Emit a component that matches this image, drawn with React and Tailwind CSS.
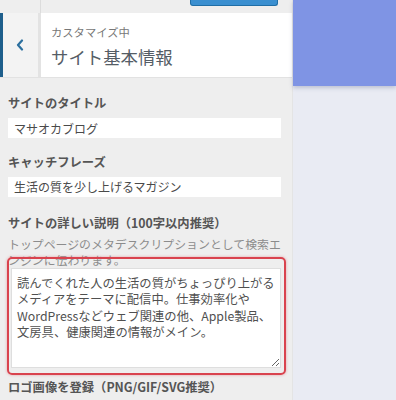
const jp = { fontFamily: '"Noto Sans CJK JP", "Noto Sans", sans-serif' };

const description = [
  '読んでくれた人の生活の質がちょっぴり上がる',
  'メディアをテーマに配信中。仕事効率化や',
  'WordPressなどウェブ関連の他、Apple製品、',
  '文房具、健康関連の情報がメイン。',
].join('\n');

function Field({ label, value }) {
  return (
    <div>
      <div className="text-[12.3px] font-bold leading-[18px] text-[#555]">{label}</div>
      <input
        readOnly
        value={value}
        className="mt-[6px] h-[20px] w-[273px] bg-white px-[6px] text-[12px] text-[#4a4a4a] outline-none"
        style={jp}
      />
    </div>
  );
}

export default function App() {
  return (
    <div className="flex h-[400px] w-[396px] overflow-hidden bg-[#e9ebf3]" style={jp}>
      {/* customizer sidebar */}
      <div className="flex w-[293px] shrink-0 flex-col border-r border-[#e4e4e4] bg-[#eeeeee]">
        <div className="flex h-[13px] shrink-0">
          <div className="w-[41px] border-r border-[#dcdcdc]" />
          <div className="ml-auto mr-[14px] h-[6px] w-[88px] rounded-b-[3px] border border-t-0 border-[#1f6ea6] bg-[#3a8fd0]" />
        </div>

        <div className="flex h-[65px] shrink-0 border-b border-[#e2e2e2]">
          <div className="flex w-[41px] items-center border-l-[3px] border-r-[3px] border-l-[#1e5f8c] border-r-[#e3e3e3] bg-[#f3f3f3] pl-[13px]">
            <svg width="8" height="12" viewBox="0 0 8 12" fill="none">
              <path d="M6 1.5 2 6l4 4.5" stroke="#2b6f9e" strokeWidth="2.2" strokeLinecap="round" strokeLinejoin="round" />
            </svg>
          </div>
          <div className="flex-1 bg-white pl-[10px] pt-[12px]">
            <div className="text-[11.3px] leading-[14px] text-[#777]">カスタマイズ中</div>
            <div className="mt-[7px] text-[17.4px] leading-[22px] text-[#555d66]">サイト基本情報</div>
          </div>
        </div>

        <div className="pl-[8px] pt-[16px]">
          <Field label="サイトのタイトル" value="マサオカブログ" />
          <div className="mt-[14px]">
            <Field label="キャッチフレーズ" value="生活の質を少し上げるマガジン" />
          </div>

          <div className="mt-[17px] text-[12.3px] font-bold leading-[18px] text-[#555]">
            サイトの詳しい説明（100字以内推奨）
          </div>
          <div className="mt-[4px] w-[280px] text-[11.9px] leading-[16px] text-[#8c8c8c]">
            トップページのメタデスクリプションとして検索エンジンに伝わります。
          </div>

          <div className="relative ml-[3px] w-[270px]">
            <textarea
              readOnly
              value={description}
              className="block h-[100px] w-[270px] resize-y border border-[#dedede] bg-white pl-[5px] pr-[4px] pt-[6px] text-[12.3px] leading-[16.4px] text-[#505050] outline-none"
              style={jp}
            />
            <div className="pointer-events-none absolute -bottom-[7px] -left-[4px] -right-[5px] -top-[11px] rounded-[5px] border-2 border-[#d9434e] shadow-[0_0_3px_rgba(217,67,78,0.45)]" />
          </div>

          <div className="mt-[10px] text-[12.3px] font-bold leading-[18px] text-[#555]">
            ロゴ画像を登録（PNG/GIF/SVG推奨）
          </div>
        </div>
      </div>

      {/* preview */}
      <div className="flex-1">
        <div className="h-[86px] bg-[#7f94e4] shadow-[0_2px_4px_rgba(60,70,120,0.25)]" />
      </div>
    </div>
  );
}
